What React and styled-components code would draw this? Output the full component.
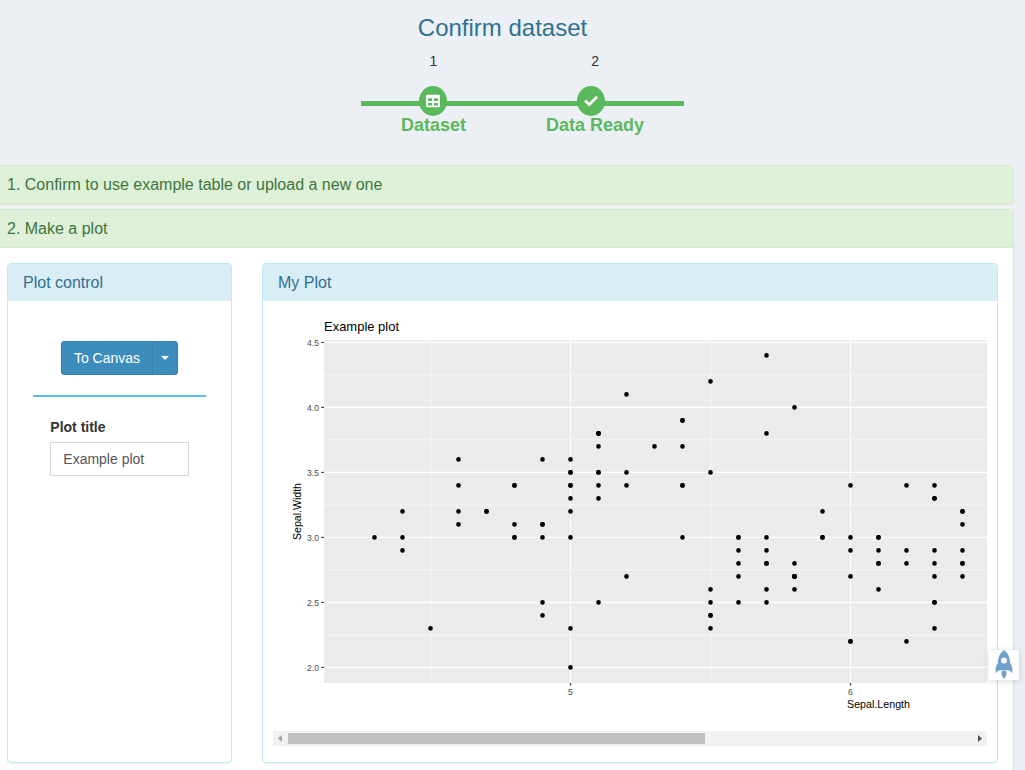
import React from "react";
import styled, { createGlobalStyle } from "styled-components";

const GlobalStyle = createGlobalStyle`
  * { box-sizing: border-box; }
  html, body { margin: 0; height: 100%; overflow: hidden; }
  body {
    background: #ecf0f5;
    color: #333;
    font: 14px/20px "Liberation Sans", Arial, sans-serif;
  }
`;

const Page = styled.main`
  width: 1025px;
  height: 770px;
  overflow: hidden;
  padding-right: 11px;
`;

const Header = styled.header`
  height: 164.6px;
  padding-top: 14px;
`;

const Title = styled.h1`
  margin: 0;
  width: 1005px;
  text-align: center;
  font-size: 24px;
  line-height: 28px;
  font-weight: 400;
  color: #31708f;
`;

const Steps = styled.div`
  display: flex;
  width: max-content;
  margin: 9px 0 0 361px;
`;

const Step = styled.div`
  display: flex;
  flex-direction: column;
  align-items: center;
`;

const StepNumber = styled.div`
  height: 35px;
`;

const StepTrack = styled.div`
  display: flex;
  align-self: stretch;
  justify-content: center;
  height: 30px;
  padding-right: ${(p) => p.$shift || 0}px;
  background: linear-gradient(#5cb85c, #5cb85c) 0 15px / 100% 5px no-repeat;
`;

const StepDot = styled.div`
  display: flex;
  align-items: center;
  justify-content: center;
  width: 28px;
  height: 30px;
  border-radius: 50%;
  background: #5cb85c;
`;

const StepLabel = styled.div`
  padding: 0 40px;
  font-size: 18px;
  line-height: 18px;
  font-weight: 700;
  color: #5cb85c;
  white-space: nowrap;
`;

const Section = styled.section`
  margin: 0 0 5px -9px;
  border: 1px solid #d6e9c6;
  border-radius: 4px;
  background: #fff;
  box-shadow: 0 1px 1px rgba(0, 0, 0, 0.05);
`;

const SectionHeading = styled.div`
  height: ${(p) => (p.$open ? "38px" : "37.6px")};
  padding: 10px 15px;
  border-bottom: ${(p) => (p.$open ? "1px solid #d6e9c6" : "0")};
  border-radius: ${(p) => (p.$open ? "3px 3px 0 0" : "3px")};
  background: #dff0d8;
  color: #3c763d;
  font-size: 16px;
  line-height: 17.6px;
`;

const SectionBody = styled.div`
  display: flex;
  gap: 30px;
  height: 540px;
  padding: 15px;
`;

const Panel = styled.div`
  width: ${(p) => p.$width}px;
  height: 500px;
  border: 1px solid #bce8f1;
  border-radius: 4px;
  background: #fff;
  box-shadow: 0 1px 1px rgba(0, 0, 0, 0.05);
`;

const PanelHeading = styled.div`
  height: 37px;
  padding: 10px 15px;
  border-radius: 3px 3px 0 0;
  background: #d9edf7;
  color: #31708f;
  font-size: 16px;
  line-height: 17.6px;
`;

const ControlBody = styled.div`
  padding: 40px 25px 0;
`;

const ButtonGroup = styled.div`
  display: flex;
  width: 117px;
  height: 34px;
  margin: 0 auto;
`;

const Button = styled.button`
  display: flex;
  align-items: center;
  justify-content: center;
  width: ${(p) => p.$width}px;
  margin-left: ${(p) => (p.$end ? -1 : 0)}px;
  padding: 0;
  border: 1px solid #367fa9;
  border-radius: ${(p) => (p.$end ? "0 3px 3px 0" : "3px 0 0 3px")};
  background: #3c8dbc;
  color: #fff;
  font: inherit;
`;

const Caret = styled.span`
  border: 4px solid transparent;
  border-top-color: #fff;
  border-bottom: 0;
`;

const Divider = styled.hr`
  height: 2px;
  margin: 20px 0;
  border: 0;
  background: #5bc0de;
`;

const Field = styled.label`
  display: flex;
  flex-direction: column;
  gap: 5px;
  padding: 0 17px 0 17.3px;
  font-weight: 700;
`;

const Input = styled.input`
  width: 100%;
  height: 34px;
  padding: 6px 12px;
  border: 1px solid #d2d6de;
  border-radius: 0;
  background: #fff;
  color: #555;
  font: inherit;
  font-weight: 400;
`;

const PlotBody = styled.div`
  padding: 10px;
`;

const Plot = styled.svg`
  display: block;
  width: 714px;
  height: 420px;
  font-family: "Liberation Sans", Arial, sans-serif;
`;

const ScrollBar = styled.div`
  display: flex;
  align-items: center;
  width: 714px;
  height: 15px;
  background: #f1f1f1;
`;

const ScrollArrow = styled.svg`
  width: 15px;
  height: 15px;
  margin-left: ${(p) => (p.$end ? "auto" : 0)};
`;

const ScrollThumb = styled.div`
  width: 417px;
  height: 11px;
  background: #c1c1c1;
`;

const Launcher = styled.div`
  position: fixed;
  left: 989px;
  top: 650px;
  width: 30px;
  height: 30px;
  border-radius: 2px;
  background: rgba(255, 255, 255, 0.84);
  box-shadow: 0 1px 7px rgba(0, 0, 0, 0.15);
`;

// Iris measurements: sepal length -> sepal widths
const SEPALS = {
  4.3: [3.0],
  4.4: [2.9, 3.0, 3.2],
  4.5: [2.3],
  4.6: [3.1, 3.4, 3.6, 3.2],
  4.7: [3.2, 3.2],
  4.8: [3.4, 3.0, 3.4, 3.1, 3.0],
  4.9: [3.0, 3.1, 3.1, 3.6, 2.4, 2.5],
  "5.0": [3.6, 3.4, 3.0, 3.4, 3.2, 3.5, 3.5, 3.3, 2.0, 2.3],
  5.1: [3.5, 3.5, 3.8, 3.7, 3.3, 3.4, 3.8, 3.8, 2.5],
  5.2: [3.5, 3.4, 4.1, 2.7],
  5.3: [3.7],
  5.4: [3.9, 3.7, 3.9, 3.4, 3.4, 3.0],
  5.5: [4.2, 3.5, 2.3, 2.4, 2.4, 2.5, 2.6],
  5.6: [2.9, 3.0, 2.5, 3.0, 2.7, 2.8],
  5.7: [4.4, 3.8, 2.8, 2.6, 3.0, 2.9, 2.8, 2.5],
  5.8: [4.0, 2.7, 2.7, 2.6, 2.7, 2.8, 2.7],
  5.9: [3.0, 3.2, 3.0],
  "6.0": [2.2, 2.9, 2.7, 3.4, 2.2, 3.0],
  6.1: [2.9, 2.8, 2.8, 3.0, 3.0, 2.6],
  6.2: [2.2, 2.9, 2.8, 3.4],
  6.3: [3.3, 2.5, 2.3, 3.3, 2.9, 2.7, 2.8, 3.4, 2.5],
  6.4: [3.2, 2.9, 2.7, 3.2, 2.8, 2.8, 3.1],
};

const px = (v) => 297.5 + (v - 5) * 280;
const py = (v) => 356.4 - (v - 2) * 130;

function SepalPlot() {
  return (
    <Plot viewBox="0 0 714 420">
      <text x="51" y="20" fontSize="13.2" textLength="75" lengthAdjust="spacingAndGlyphs">Example plot</text>
      <rect x="51" y="29" width="663" height="343" fill="#ebebeb" />
      <g stroke="#fff" strokeWidth="0.6">
        {[2.25, 2.75, 3.25, 3.75, 4.25].map((v) => (
          <path key={v} d={`M51 ${py(v)}H714`} />
        ))}
        {[4.5, 5.5].map((v) => (
          <path key={v} d={`M${px(v)} 29V372`} />
        ))}
      </g>
      <g stroke="#fff" strokeWidth="1.1">
        {[2, 2.5, 3, 3.5, 4, 4.5].map((v) => (
          <path key={v} d={`M51 ${py(v)}H714`} />
        ))}
        {[5, 6].map((v) => (
          <path key={v} d={`M${px(v)} 29V372`} />
        ))}
      </g>
      {Object.entries(SEPALS).flatMap(([length, widths]) =>
        widths.map((w, i) => (
          <circle key={`${length}-${i}`} cx={px(+length)} cy={py(w)} r="2.3" />
        ))
      )}
      {[2, 2.5, 3, 3.5, 4, 4.5].map((v) => (
        <g key={v}>
          <path d={`M48.3 ${py(v)}H51`} stroke="#333" strokeWidth="1.1" />
          <text x="46" y={py(v) + 3.5} fontSize="8.8" fill="#4d4d4d" textAnchor="end" textLength="12" lengthAdjust="spacingAndGlyphs">
            {v.toFixed(1)}
          </text>
        </g>
      ))}
      {[5, 6].map((v) => (
        <g key={v}>
          <path d={`M${px(v)} 372V374.7`} stroke="#333" strokeWidth="1.1" />
          <text x={px(v)} y="384" fontSize="8.8" fill="#4d4d4d" textAnchor="middle">{v}</text>
        </g>
      ))}
      <text x="574" y="397" fontSize="11" textLength="63" lengthAdjust="spacingAndGlyphs">Sepal.Length</text>
      <text transform="translate(28 229) rotate(-90)" fontSize="11" textLength="57" lengthAdjust="spacingAndGlyphs">Sepal.Width</text>
    </Plot>
  );
}

function TableIcon() {
  return (
    <svg width="14" height="14" viewBox="0 0 14 14">
      <path
        fill="#fff"
        fillRule="evenodd"
        d="M1.2 .7H12.8Q14 .7 14 1.9V12.1Q14 13.3 12.8 13.3H1.2Q0 13.3 0 12.1V1.9Q0 .7 1.2 .7ZM2 4.3V7H6.1V4.3ZM7.9 4.3V7H12V4.3ZM2 9V11.5H6.1V9ZM7.9 9V11.5H12V9Z"
      />
    </svg>
  );
}

function CheckIcon() {
  return (
    <svg width="14" height="14" viewBox="0 0 14 14">
      <path d="M1.1 6.6L5.3 10.6L13 2.8" fill="none" stroke="#fff" strokeWidth="2.7" />
    </svg>
  );
}

function RocketIcon() {
  return (
    <svg width="30" height="30" viewBox="0 0 30 30" fill="#6fa1cd">
      <path
        fillRule="evenodd"
        d="M15 .3C18.5 2.2 21 7 21.2 13.2C23 15.5 24 19 23.1 23.2C22 21.3 20.4 20.2 18.5 20.2H11.5C9.6 20.2 8 21.3 6.9 23.2C6 19 7 15.5 8.8 13.2C9 7 11.5 2.2 15 .3ZM15 7.5A3 3 0 1 0 15 13.5A3 3 0 1 0 15 7.5Z"
      />
      <path d="M12.8 20.8H17.2C18.2 24 16.8 27.2 15 29C13.2 27.2 11.8 24 12.8 20.8Z" />
    </svg>
  );
}

export default function App() {
  return (
    <Page>
      <GlobalStyle />
      <Header>
        <Title>Confirm dataset</Title>
        <Steps>
          <Step>
            <StepNumber>1</StepNumber>
            <StepTrack $shift={1}>
              <StepDot><TableIcon /></StepDot>
            </StepTrack>
            <StepLabel>Dataset</StepLabel>
          </Step>
          <Step>
            <StepNumber>2</StepNumber>
            <StepTrack $shift={8}>
              <StepDot><CheckIcon /></StepDot>
            </StepTrack>
            <StepLabel>Data Ready</StepLabel>
          </Step>
        </Steps>
      </Header>
      <Section>
        <SectionHeading>1. Confirm to use example table or upload a new one</SectionHeading>
      </Section>
      <Section>
        <SectionHeading $open>2. Make a plot</SectionHeading>
        <SectionBody>
          <Panel $width={225}>
            <PanelHeading>Plot control</PanelHeading>
            <ControlBody>
              <ButtonGroup>
                <Button $width={92}>To Canvas</Button>
                <Button $width={26} $end aria-label="More"><Caret /></Button>
              </ButtonGroup>
              <Divider />
              <Field>
                Plot title
                <Input defaultValue="Example plot" />
              </Field>
            </ControlBody>
          </Panel>
          <Panel $width={736}>
            <PanelHeading>My Plot</PanelHeading>
            <PlotBody>
              <SepalPlot />
              <ScrollBar>
                <ScrollArrow viewBox="0 0 15 15"><path d="M9 4V11L5 7.5Z" fill="#a3a3a3" /></ScrollArrow>
                <ScrollThumb />
                <ScrollArrow $end viewBox="0 0 15 15"><path d="M6 4V11L10 7.5Z" fill="#505050" /></ScrollArrow>
              </ScrollBar>
            </PlotBody>
          </Panel>
        </SectionBody>
      </Section>
      <Launcher><RocketIcon /></Launcher>
    </Page>
  );
}
